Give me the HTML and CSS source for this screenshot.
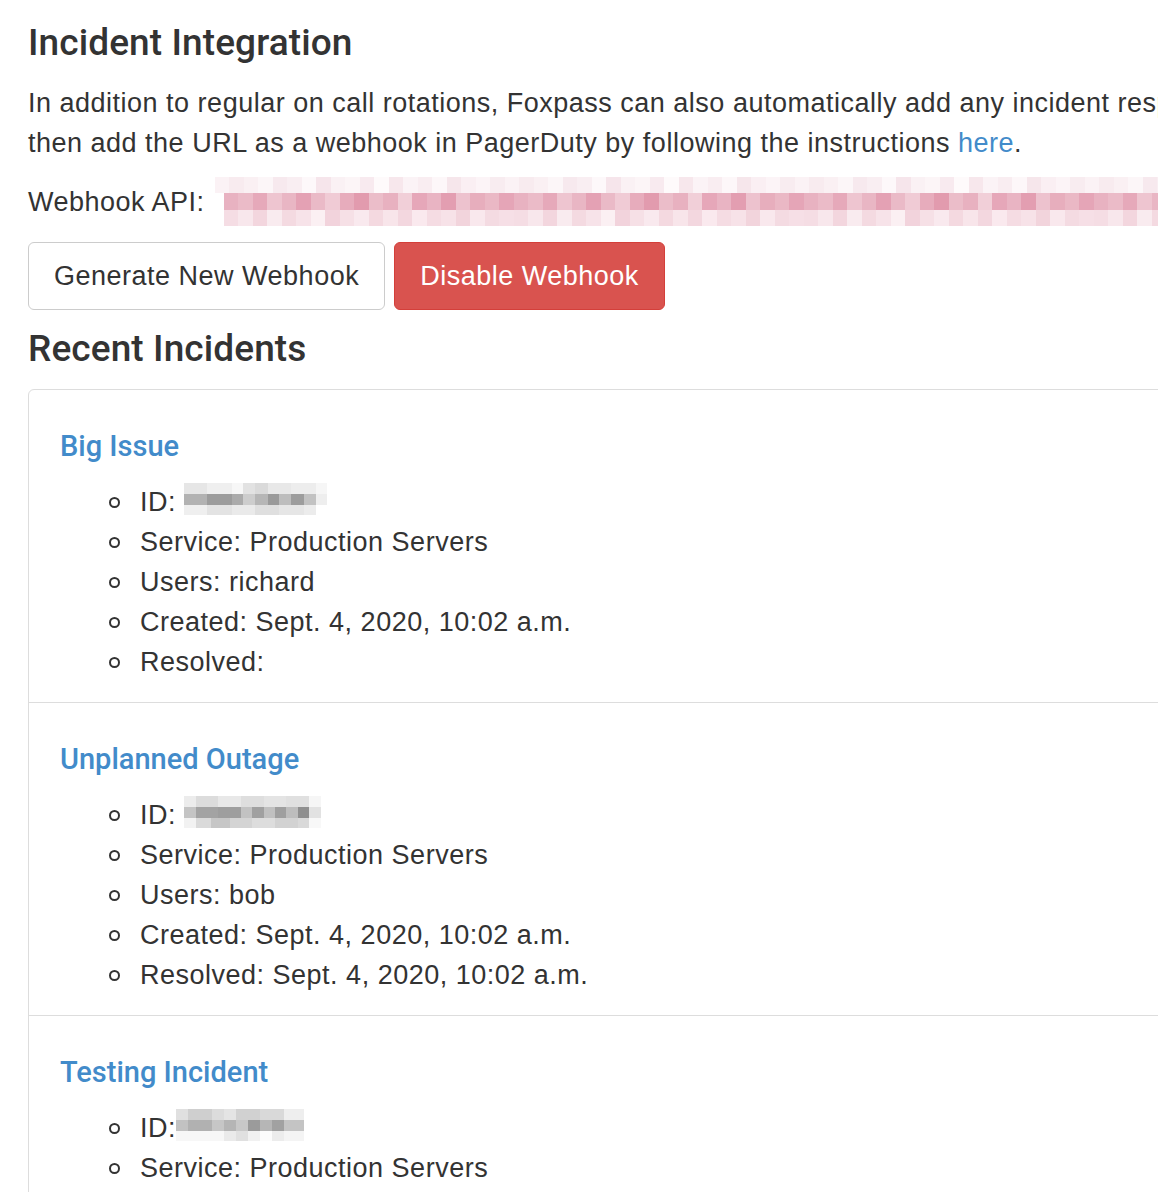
FILE: index.html
```html
<!DOCTYPE html>
<html lang="en">
<head>
    <meta charset="UTF-8">
    <meta name="viewport" content="width=device-width, initial-scale=1.0">
    <title>Incident Integration</title>
    <link rel="stylesheet" href="styles.css">
</head>
<body>
    <div class="page">
        <h3 class="section-title">Incident Integration</h3>
        <p class="intro">In addition to regular on call rotations, Foxpass can also automatically add any incident responders to this group. Create a webhook,<br>then add the URL as a webhook in PagerDuty by following the instructions <a href="#">here</a>.</p>

        <div class="webhook-row">
            <span class="webhook-label">Webhook API:</span>
            <!-- redacted url -->
            <div class="redacted-url">
                <div class="px-row top"></div>
                <div class="px-row mid"></div>
                <div class="px-row bot"></div>
            </div>
        </div>

        <div class="actions">
            <button class="btn btn-default">Generate New Webhook</button>
            <button class="btn btn-danger">Disable Webhook</button>
        </div>

        <h3 class="section-title">Recent Incidents</h3>

        <div class="list-group">
            <div class="list-group-item">
                <h4 class="incident-title"><a href="#">Big Issue</a></h4>
                <ul class="incident-details">
                    <li>ID: <span class="redacted-id id-1"><i></i><i></i><i></i></span></li>
                    <li>Service: Production Servers</li>
                    <li>Users: richard</li>
                    <li>Created: Sept. 4, 2020, 10:02 a.m.</li>
                    <li>Resolved: </li>
                </ul>
            </div>
            <div class="list-group-item">
                <h4 class="incident-title"><a href="#">Unplanned Outage</a></h4>
                <ul class="incident-details">
                    <li>ID: <span class="redacted-id id-2"><i></i><i></i><i></i></span></li>
                    <li>Service: Production Servers</li>
                    <li>Users: bob</li>
                    <li>Created: Sept. 4, 2020, 10:02 a.m.</li>
                    <li>Resolved: Sept. 4, 2020, 10:02 a.m.</li>
                </ul>
            </div>
            <div class="list-group-item">
                <h4 class="incident-title"><a href="#">Testing Incident</a></h4>
                <ul class="incident-details">
                    <li>ID:<span class="redacted-id id-3"><i></i><i></i><i></i></span></li>
                    <li>Service: Production Servers</li>
                    <li>Users: richard</li>
                    <li>Created: Sept. 4, 2020, 10:01 a.m.</li>
                    <li>Resolved: Sept. 4, 2020, 10:02 a.m.</li>
                </ul>
            </div>
        </div>
    </div>
</body>
</html>
```

FILE: styles.css
```css
html, body {
    overflow: hidden;
}
body {
    font-family: "Liberation Sans", Arial, sans-serif;
    font-size: 27px;
    letter-spacing: 0.5px;
    line-height: 40px;
    color: #333;
    background-color: #fff;
    margin: 0;
    padding: 0;
}
a {
    color: #428bca;
    text-decoration: none;
}
.page {
    width: 1700px;
    padding: 21px 28px 0;
}
.section-title {
    font-family: Roboto, "Liberation Sans", sans-serif;
    font-size: 37px;
    font-weight: 500;
    letter-spacing: 0.1px;
    line-height: 44px;
    margin: 0 0 18px;
}
.intro {
    margin: 0 0 14px;
}
.webhook-row {
    display: flex;
    align-items: center;
    gap: 10px;
    height: 49px;
    margin-bottom: 16px;
}
.redacted-url {
    flex: 1;
    display: flex;
    flex-direction: column;
}
.px-row {
    height: 16px;
    background-size: 290px 100%;
}
.px-row.top {
    background-image: linear-gradient(to right,
        #fbf2f5 0 14.5px, #f8ebef 14.5px 29px, #faf0f3 29px 43.5px, #fcf6f8 43.5px 58px,
        #f7e9ee 58px 72.5px, #f9eef2 72.5px 87px, #fdf8fa 87px 101.5px, #f6e5eb 101.5px 116px,
        #faf1f4 116px 130.5px, #fcf5f7 130.5px 145px, #f8eaef 145px 159.5px, #fefafb 159.5px 174px,
        #f7e7ec 174px 188.5px, #fbf3f6 188.5px 203px, #f9edf1 203px 217.5px, #fdf7f9 217.5px 232px,
        #f6e6eb 232px 246.5px, #faeff3 246.5px 261px, #fcf4f7 261px 275.5px, #f8ecf0 275.5px 290px);
}
.px-row.mid {
    margin-left: 9px;
    height: 17px;
    background-image: linear-gradient(to right,
        #e8b2c1 0 14.5px, #ebbbc8 14.5px 29px, #e6a9ba 29px 43.5px, #eec5d0 43.5px 58px,
        #e9b6c4 58px 72.5px, #e4a1b4 72.5px 87px, #eabac7 87px 101.5px, #f0cbd5 101.5px 116px,
        #e7acbc 116px 130.5px, #e29bae 130.5px 145px, #ebbdc9 145px 159.5px, #e8b1c0 159.5px 174px,
        #f1cfd8 174px 188.5px, #e6a7b9 188.5px 203px, #e9b4c3 203px 217.5px, #e39eb1 217.5px 232px,
        #edc2ce 232px 246.5px, #e7aebd 246.5px 261px, #eab8c5 261px 275.5px, #e5a5b7 275.5px 290px);
}
.px-row.bot {
    margin-left: 9px;
    background-image: linear-gradient(to right,
        #f5dde4 0 14.5px, #f8e7ec 14.5px 29px, #f3d6de 29px 43.5px, #f9ebef 43.5px 58px,
        #f4dae1 58px 72.5px, #f7e3e9 72.5px 87px, #fbf0f3 87px 101.5px, #f2d3dc 101.5px 116px,
        #f6e0e6 116px 130.5px, #f9e9ee 130.5px 145px, #f4d9e0 145px 159.5px, #f8e5ea 159.5px 174px,
        #f3d7df 174px 188.5px, #fae9ee 188.5px 203px, #f5dce3 203px 217.5px, #f7e2e8 217.5px 232px,
        #f2d4dc 232px 246.5px, #f9e8ed 246.5px 261px, #f4dbe2 261px 275.5px, #f6dfe6 275.5px 290px);
}
.actions {
    display: flex;
    gap: 9px;
    margin-bottom: 17px;
}
.btn {
    font: inherit;
    letter-spacing: 0.5px;
    line-height: 40px;
    padding: 13px 25px;
    border: 1px solid #ccc;
    border-radius: 6px;
    background-color: #fff;
    color: #333;
    cursor: pointer;
}
.btn-danger {
    background-color: #d9534f;
    border-color: #d43f3a;
    color: #fff;
}
.list-group {
    border: 1px solid #ddd;
    border-radius: 6px 0 0 0;
}
.list-group-item {
    padding: 40px 31px 20px;
    border-bottom: 1px solid #ddd;
}
.incident-title {
    font-family: Roboto, "Liberation Sans", sans-serif;
    font-size: 29px;
    font-weight: 500;
    letter-spacing: 0;
    line-height: 32px;
    margin: 0 0 20px;
}
.incident-details {
    list-style: none;
    margin: 0;
    padding-left: 80px;
}
.incident-details li {
    position: relative;
}
.incident-details li::before {
    content: "";
    position: absolute;
    left: -31px;
    top: 15px;
    width: 7px;
    height: 7px;
    border: 2px solid #333;
    border-radius: 50%;
}
.redacted-id {
    display: inline-block;
    height: 32px;
    vertical-align: -4px;
}
.redacted-id i {
    display: block;
    height: 11px;
}
.redacted-id i:last-child {
    height: 10px;
}
.id-1 { width: 143px; }
.id-1 i:nth-child(1) {
    background: linear-gradient(to right, #e6e6e6 0 23px, #efefef 23px 48px, #f7f7f7 48px 59px, #e2e2e2 59px 71px, #dadada 71px 84px, #e8e8e8 84px 107px, #ededed 107px 132px, #f6f6f6 132px);
}
.id-1 i:nth-child(2) {
    background: linear-gradient(to right, #b2b2b2 0 23px, #9c9c9c 23px 48px, #ababab 48px 59px, #cdcdcd 59px 71px, #b6b6b6 71px 84px, #9a9a9a 84px 95px, #bdbdbd 95px 107px, #9d9d9d 107px 120px, #c2c2c2 120px 132px, #eeeeee 132px);
}
.id-1 i:nth-child(3) {
    background: linear-gradient(to right, #efefef 0 23px, #e3e3e3 23px 48px, #eaeaea 48px 71px, #dfdfdf 71px 95px, #e6e6e6 95px 120px, #ececec 120px 132px, #fff 132px);
}
.id-2 { width: 137px; }
.id-2 i:nth-child(1) {
    background: linear-gradient(to right, #ececec 0 12px, #dcdcdc 12px 34px, #e8e8e8 34px 57px, #dedede 57px 80px, #e4e4e4 80px 102px, #e0e0e0 102px 125px, #f6f6f6 125px);
}
.id-2 i:nth-child(2) {
    background: linear-gradient(to right, #c4c4c4 0 12px, #a3a3a3 12px 34px, #9e9e9e 34px 57px, #c2c2c2 57px 68px, #a0a0a0 68px 80px, #c0c0c0 80px 91px, #9f9f9f 91px 102px, #bdbdbd 102px 114px, #8f8f8f 114px 125px, #e2e2e2 125px);
}
.id-2 i:nth-child(3) {
    background: linear-gradient(to right, #f2f2f2 0 12px, #dadada 12px 27px, #c6c6c6 27px 46px, #d4d4d4 46px 68px, #dddddd 68px 91px, #d2d2d2 91px 114px, #d9d9d9 114px 125px, #f8f8f8 125px);
}
.id-3 { width: 128px; }
.id-3 i:nth-child(1) {
    background: linear-gradient(to right, #e0e0e0 0 12px, #cfcfcf 12px 36px, #dcdcdc 36px 48px, #e4e4e4 48px 60px, #d1d1d1 60px 84px, #d9d9d9 84px 108px, #eeeeee 108px);
}
.id-3 i:nth-child(2) {
    background: linear-gradient(to right, #c2c2c2 0 12px, #b1b1b1 12px 36px, #c6c6c6 36px 48px, #b5b5b5 48px 60px, #c8c8c8 60px 72px, #9b9b9b 72px 84px, #b6b6b6 84px 96px, #a1a1a1 96px 108px, #c4c4c4 108px);
}
.id-3 i:nth-child(3) {
    background: linear-gradient(to right, #f7f7f7 0 48px, #eaeaea 48px 60px, #e0e0e0 60px 72px, #f1f1f1 72px 84px, #fcfcfc 84px 96px, #ececec 96px 108px, #f4f4f4 108px);
}
```
